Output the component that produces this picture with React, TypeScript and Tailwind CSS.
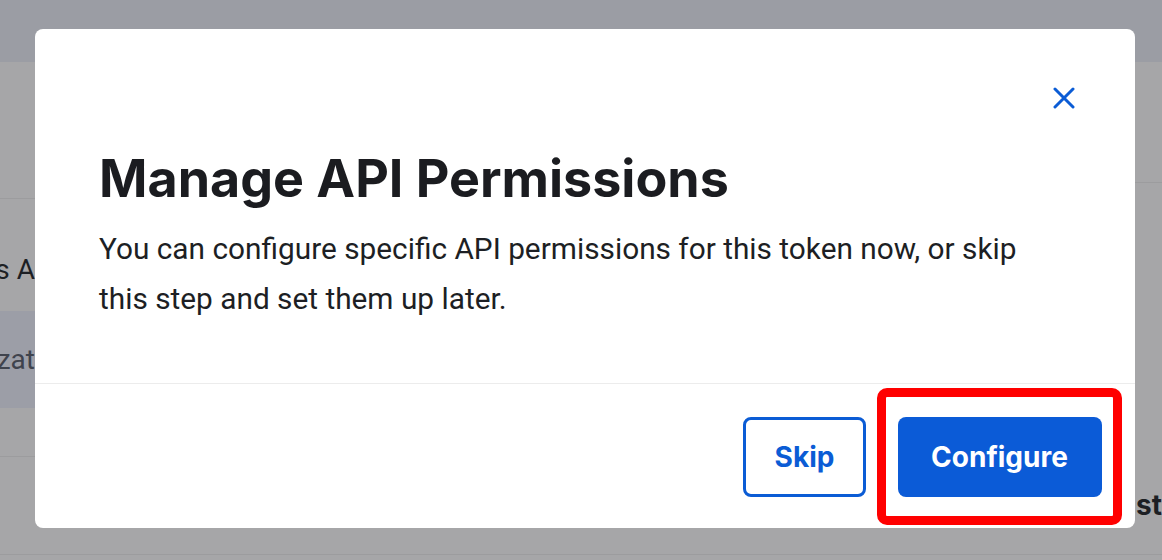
import React from "react";

export default function App() {
  return (
    <div className="relative w-[1162px] h-[560px] overflow-hidden bg-[#a6a6a8]" style={{ fontFamily: "Roboto, 'Liberation Sans', sans-serif" }}>
      {/* background page */}
      <div className="flex flex-col w-full h-full">
        <div className="h-[62px] bg-[#9b9da4] shrink-0" />
        <div className="flex h-[493px] shrink-0 border-b border-[#9c9c9e]">
          <div className="w-[35px] flex flex-col shrink-0">
            <div className="h-[137px] border-b border-[#9c9c9e]" />
            <div className="h-[112px] pt-[30px] flex items-center justify-end text-[28px] text-[#1d1f24] whitespace-nowrap overflow-hidden">s A</div>
            <div className="h-[97px] bg-[#9c9ea7] flex items-center justify-end text-[28px] text-[#3f434d] whitespace-nowrap overflow-hidden">zat</div>
            <div className="h-[49px] border-b border-[#9c9c9e]" />
            <div className="flex-1" />
          </div>
          <div className="flex-1" />
          <div className="w-[27px] flex flex-col shrink-0">
            <div className="h-[121px] border-b border-[#9c9c9e]" />
            <div className="h-[302px]" />
            <div className="h-[40px] flex items-center text-[28px] leading-[32px] font-bold text-[#1d1f24] whitespace-nowrap pl-[1px]" style={{ fontFamily: "Inter, sans-serif" }}>st</div>
          </div>
        </div>
        <div className="flex-1" />
      </div>

      {/* modal */}
      <div className="absolute left-[35px] top-[29px] w-[1100px] h-[499px] bg-white rounded-[8px] flex flex-col">
        <div className="flex flex-col h-[354px] pl-[64px] pr-[40px] relative">
          <button className="absolute right-[59px] top-[57px] w-[24px] h-[24px] flex items-center justify-center text-[#0b5cd5]">
            <svg width="22" height="22" viewBox="0 0 22 22" fill="none" stroke="currentColor" strokeWidth="3" strokeLinecap="round">
              <path d="M2 2 L20 20 M20 2 L2 20" />
            </svg>
          </button>
          <h1 className="mt-[120px] text-[52px] leading-[60px] font-bold text-[#1b1c20]" style={{ fontFamily: "Inter, sans-serif" }}>
            Manage API Permissions
          </h1>
          <p className="mt-[15px] text-[29.8px] leading-[50px] text-[#1d1f24] w-[940px]">
            You can configure specific API permissions for this token now, or skip this step and set them up later.
          </p>
        </div>
        <div className="border-t border-[#ececec] flex-1 flex items-start justify-end pr-[13px] pt-[4px]">
          <div className="flex items-center gap-[11px]">
            <button className="w-[123px] h-[80px] rounded-[8px] border-[3px] border-[#0b5cd5] text-[#0b5cd5] text-[28px] font-bold" style={{ fontFamily: "Inter, sans-serif" }}>
              Skip
            </button>
            <div className="w-[245px] h-[137px] border-[9px] border-[#ff0000] rounded-[10px] flex items-center justify-center">
              <button className="w-[204px] h-[80px] rounded-[8px] bg-[#0b5bd7] text-white text-[28px] font-bold" style={{ fontFamily: "Inter, sans-serif" }}>
                Configure
              </button>
            </div>
          </div>
        </div>
      </div>
    </div>
  );
}
